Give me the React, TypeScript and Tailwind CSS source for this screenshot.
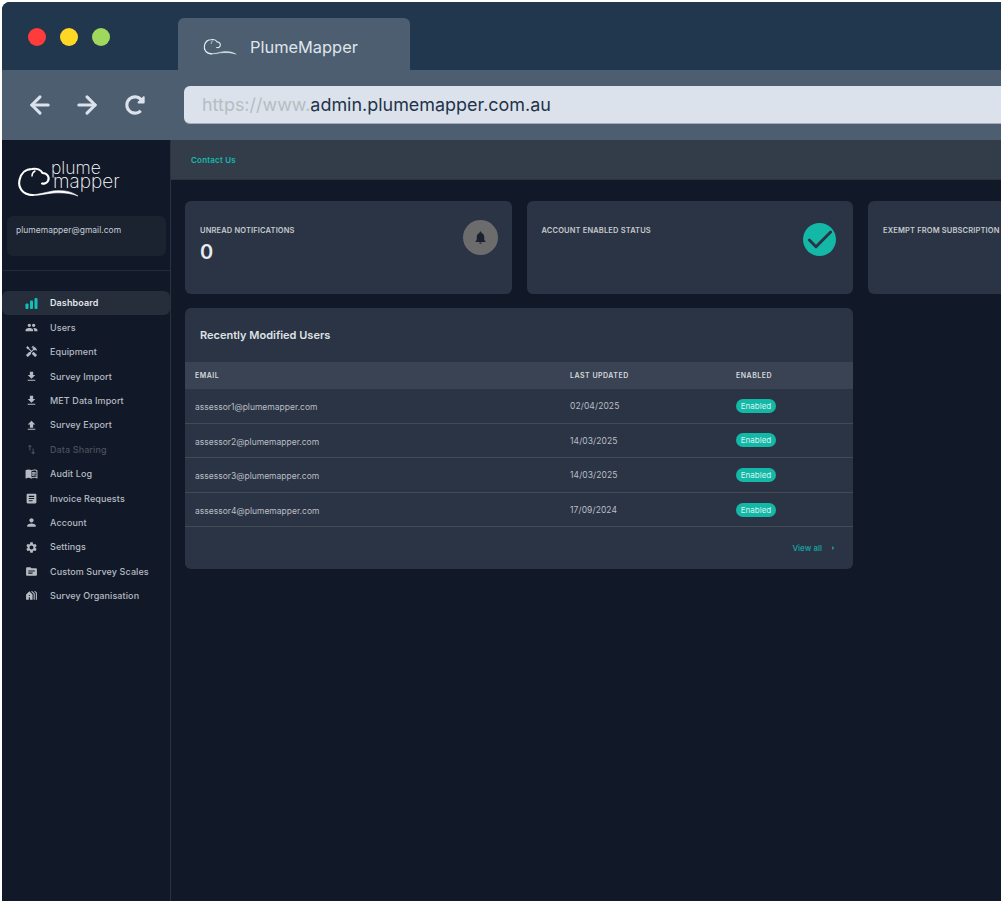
import React from 'react';
import { ArrowLeft, ArrowRight, Check } from 'lucide-react';
import { FaRedoAlt } from 'react-icons/fa';
import {
  MdPeople,
  MdHandyman,
  MdFileDownload,
  MdFileUpload,
  MdImportExport,
  MdMenuBook,
  MdArticle,
  MdPerson,
  MdSettings,
  MdSource,
  MdHolidayVillage,
  MdNotifications,
  MdArrowRight,
} from 'react-icons/md';

const BarsIcon = ({ size, className }: { size?: number; className?: string }) => (
  <svg viewBox="0 0 13 12" width={size} height={size} fill="currentColor" className={className}>
    <rect x="0.5" y="6" width="3" height="5.5" rx="1" />
    <rect x="5" y="3" width="3" height="8.5" rx="1" />
    <rect x="9.5" y="0.5" width="3" height="11" rx="1" />
  </svg>
);

const navItems = [
  { label: 'Dashboard', icon: BarsIcon, active: true },
  { label: 'Users', icon: MdPeople },
  { label: 'Equipment', icon: MdHandyman },
  { label: 'Survey Import', icon: MdFileDownload },
  { label: 'MET Data Import', icon: MdFileDownload },
  { label: 'Survey Export', icon: MdFileUpload },
  { label: 'Data Sharing', icon: MdImportExport, disabled: true },
  { label: 'Audit Log', icon: MdMenuBook },
  { label: 'Invoice Requests', icon: MdArticle },
  { label: 'Account', icon: MdPerson },
  { label: 'Settings', icon: MdSettings },
  { label: 'Custom Survey Scales', icon: MdSource },
  { label: 'Survey Organisation', icon: MdHolidayVillage },
];

const rows = [
  { email: 'assessor1@plumemapper.com', date: '02/04/2025' },
  { email: 'assessor2@plumemapper.com', date: '14/03/2025' },
  { email: 'assessor3@plumemapper.com', date: '14/03/2025' },
  { email: 'assessor4@plumemapper.com', date: '17/09/2024' },
];

const CloudMark = ({ className }: { className: string }) => (
  <svg viewBox="8 14 62 33" fill="none" stroke="currentColor" strokeLinecap="round" className={className}>
    <path
      d="M24 43 C13 43 9 35 10.5 28 C12 21 17 17 23 17 C28 16 32 18 33.5 21 C38 21 41 25 39 29 C38 31 35 32 33 31.5"
      strokeWidth="2.1"
    />
    <path d="M23 24 C23 21 24 20 26 19" strokeWidth="1.4" />
    <path
      d="M16 41 C23 45 33 41 44 39 C54 38 62 39 69 44 C61 41 54 40.5 44 41 C33 42 22 46 16 41 Z"
      fill="currentColor"
      strokeWidth="0.6"
    />
  </svg>
);

const StatCard = ({ title, children }: { title: string; children?: React.ReactNode }) => (
  <div className="relative h-[93px] w-[326.5px] shrink-0 rounded-md bg-[#2b3444] pl-[15px] pt-[25px]">
    <div className="whitespace-nowrap text-[7.5px] leading-[10px] font-semibold tracking-[0.15px] text-[#c5c9cf]">{title}</div>
    {children}
  </div>
);

const App: React.FC = () => {
  return (
    <div
      className="h-[901px] w-[1001px] overflow-hidden bg-white pl-[2px] pt-[2px]"
      style={{ fontFamily: 'Inter, "Noto Sans", sans-serif' }}
    >
      <div className="flex h-[899px] w-[999px] flex-col overflow-hidden rounded-tl-[8px] bg-[#111827]">
        {/* browser tab strip */}
        <div className="flex h-[68px] shrink-0 items-end bg-[#20374e]">
          <div className="flex h-[68px] w-[176px] items-start gap-[14px] pl-[26px] pt-[26px]">
            <span className="h-[18px] w-[18px] rounded-full bg-[#ff3b3b]" />
            <span className="h-[18px] w-[18px] rounded-full bg-[#ffd825]" />
            <span className="h-[18px] w-[18px] rounded-full bg-[#a0d75d]" />
          </div>
          <div className="flex h-[52px] w-[232px] items-center rounded-t-[6px] bg-[#4d5e70] pl-[25px] pt-[6px]">
            <CloudMark className="h-[18px] w-[34px] text-[#e6ebf1]" />
            <span className="ml-[13px] text-[16.4px] text-[#dfe5ec]">PlumeMapper</span>
          </div>
        </div>

        {/* browser toolbar */}
        <div className="flex h-[70px] shrink-0 items-center bg-[#4d5e70] pb-[1px]">
          <div className="flex w-[182px] shrink-0 items-center pl-[24px] text-[#dbe2ec]">
            <ArrowLeft size={28} strokeWidth={2.6} />
            <ArrowRight size={28} strokeWidth={2.6} className="ml-[19px]" />
            <FaRedoAlt size={20} className="ml-[24px]" />
          </div>
          <div className="flex h-[38px] flex-1 items-center rounded-l-[6px] border-b border-[#a4adb9] bg-[#dbe2ec] pl-[18px] pt-[3px] text-[17.95px]">
            <span className="text-[#b8bcc2]">https://www.</span>
            <span className="text-[#1f3349]">admin.plumemapper.com.au</span>
          </div>
        </div>

        <div className="flex min-h-0 flex-1">
          {/* sidebar */}
          <aside className="w-[169px] shrink-0 border-r border-[#2a3240]">
            <div className="relative h-[76px]">
              <CloudMark className="absolute left-[15px] top-[26px] h-[33px] w-[62px] text-white" />
              <div className="absolute left-[49px] top-[21px] text-[17.5px] leading-[14px] font-extralight text-white">plume</div>
              <div className="absolute left-[51px] top-[35px] text-[19px] leading-[14px] font-extralight text-white">mapper</div>
            </div>
            <div className="mx-[5px] h-[40px] w-[159px] rounded-md bg-[#1b2331] pl-[9px] pt-[9px] text-[8.5px] leading-[11px] text-[#c6cbd2]">
              plumemapper@gmail.com
            </div>
            <div className="mt-[14px] border-t border-[#232c3a]" />
            <nav className="mt-[20px] flex flex-col">
              {navItems.map(item => {
                const Icon = item.icon;
                return (
                  <div
                    key={item.label}
                    className={`flex h-[24.4px] items-center rounded-md pl-[23px] text-[9px] ${
                      item.active
                        ? 'bg-[#262e3c] font-semibold text-[#e4e7eb]'
                        : item.disabled
                          ? 'font-medium text-[#4a515e]'
                          : 'font-medium text-[#b6bbc3]'
                    }`}
                  >
                    <Icon
                      size={13}
                      className={`w-[13px] ${item.active ? 'text-[#14c0b4]' : item.disabled ? 'text-[#4a515e]' : 'text-[#b6bbc3]'}`}
                    />
                    <span className="ml-[12px] whitespace-nowrap tracking-[0.1px]">{item.label}</span>
                  </div>
                );
              })}
            </nav>
          </aside>

          {/* main column */}
          <div className="min-w-0 flex-1">
            <div className="flex h-[40px] items-center border-b border-[#2b333f] bg-[#333d49] pl-[20px] text-[8px] font-semibold tracking-[0.2px] text-[#14b8b0]">
              Contact Us
            </div>
            <div className="pl-[14px] pt-[21px]">
              <div className="flex gap-[15px]">
                <StatCard title="UNREAD NOTIFICATIONS">
                  <div className="mt-[4px] text-[20px] leading-[24px] font-semibold text-[#e8ebef]">0</div>
                  <div className="absolute right-[14px] top-[19px] flex h-[35px] w-[35px] items-center justify-center rounded-full bg-[#6c6c6c]">
                    <MdNotifications size={15} className="text-[#1a2230]" />
                  </div>
                </StatCard>
                <StatCard title="ACCOUNT ENABLED STATUS">
                  <div className="absolute right-[17px] top-[22px] flex h-[33px] w-[33px] items-center justify-center rounded-full bg-[#14b8a6]">
                    <Check size={32} strokeWidth={2.2} className="shrink-0 text-[#2b3444]" />
                  </div>
                </StatCard>
                <StatCard title="EXEMPT FROM SUBSCRIPTION" />
              </div>

              <div className="mt-[14px] h-[261px] w-[668px] rounded-md bg-[#2b3444]">
                <div className="flex h-[54px] items-center pl-[15px] pt-[1px] text-[11px] font-semibold text-[#dfe2e6]">Recently Modified Users</div>
                <div className="grid h-[27px] grid-cols-[375px_166px_1fr] items-center bg-[#394353] pl-[10px] pt-[1px] text-[7px] font-semibold tracking-[0.5px] text-[#d5d9de]">
                  <span>EMAIL</span>
                  <span>LAST UPDATED</span>
                  <span>ENABLED</span>
                </div>
                {rows.map(row => (
                  <div
                    key={row.email}
                    className="grid h-[34.6px] grid-cols-[375px_166px_1fr] items-center border-b border-[#434b56] pl-[10px] text-[8.5px] text-[#b9bec5]"
                  >
                    <span className="pt-[3px]">{row.email}</span>
                    <span className="pt-[1px] tracking-[0.1px]">{row.date}</span>
                    <span>
                      <span className="inline-flex h-[14px] w-[40px] items-center justify-center rounded-full bg-[#14b8a6] text-[8px] text-[#d8f3ee]">
                        Enabled
                      </span>
                    </span>
                  </div>
                ))}
                <div className="flex h-[42px] items-center justify-end pr-[15px] text-[8px] font-medium text-[#12a8a8]">
                  View all
                  <MdArrowRight size={10} className="ml-[6px]" />
                </div>
              </div>
            </div>
          </div>
        </div>
      </div>
    </div>
  );
};

export default App;
